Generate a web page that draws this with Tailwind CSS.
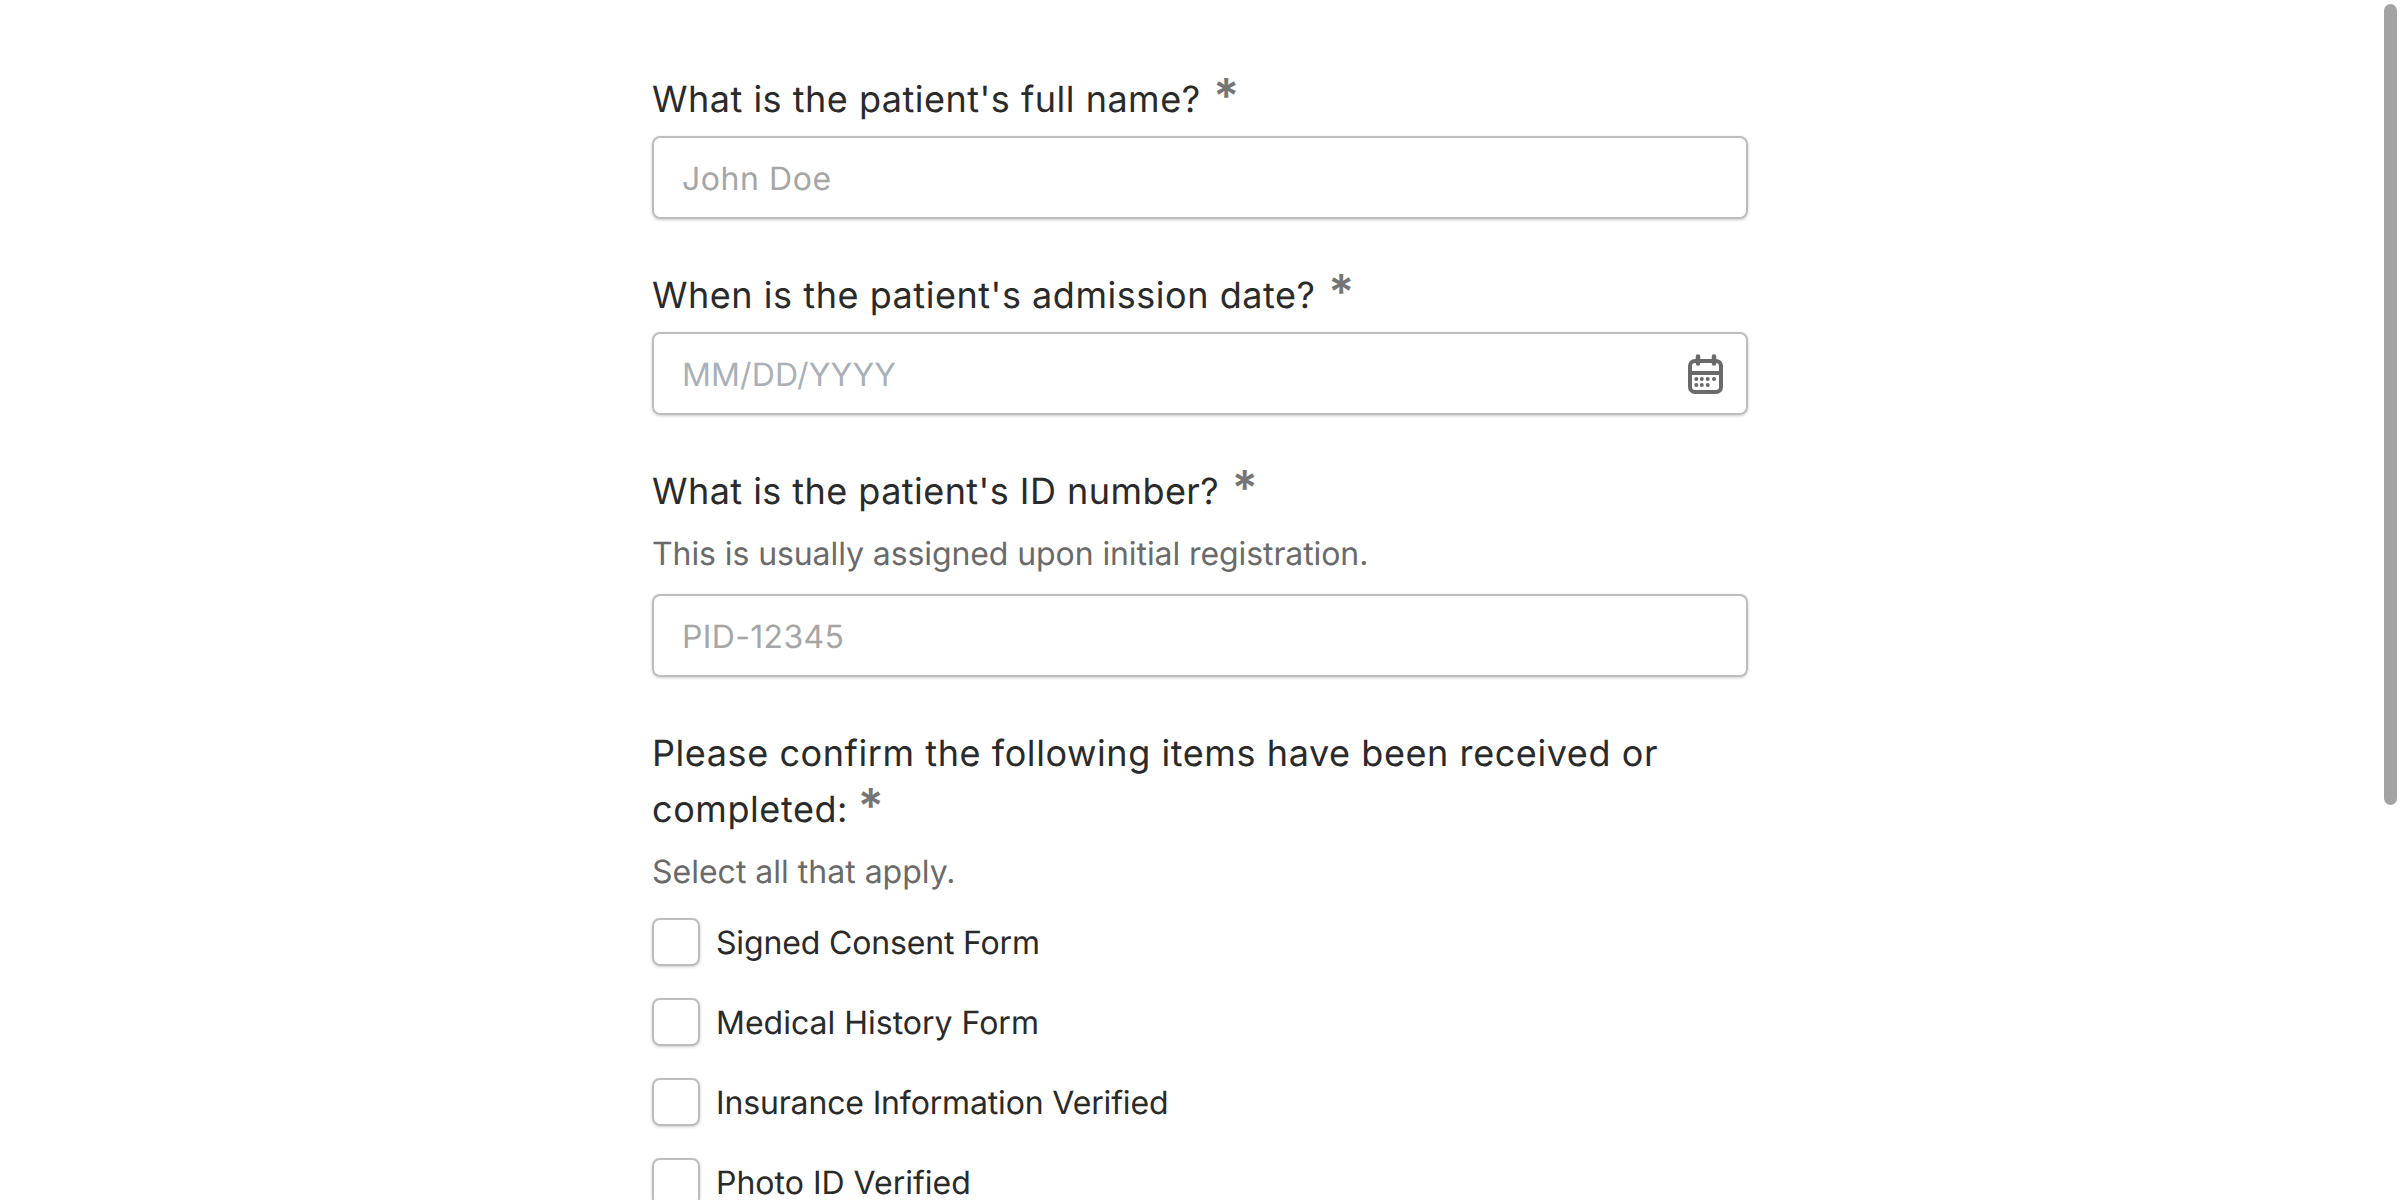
<!DOCTYPE html>
<html lang="en"><head><meta charset="utf-8"><title>Patient form</title>
<script src="https://cdn.jsdelivr.net/npm/@tailwindcss/browser@4"></script></head>
<body class="bg-white">
<div class="relative h-[1200px] overflow-hidden font-['Inter',sans-serif] [text-rendering:geometricPrecision] antialiased">
<main class="w-[1096px] flex flex-col pt-[68px] ml-[652px]">
  <section class="flex flex-col">
    <label class="pt-[3px] text-[36px] leading-[56px] text-[#2a2a2a] tracking-[0.5px]">What is the patient's full name? <span class="relative top-[1px] text-[#757575] text-[48px] font-semibold leading-[1] ml-[2px]">*</span></label>
    <div class="mt-[9px] h-[83px] border-2 border-[#bdbdbd] rounded-[8px] shadow-[0_1px_3px_rgba(0,0,0,0.2)] flex items-center px-[28px] pt-[2px] text-[32px] tracking-[0.55px] text-[#a6a6a6]">John Doe</div>
  </section>
  <section class="flex flex-col mt-[45px]">
    <label class="pt-[3px] text-[36px] leading-[56px] text-[#2a2a2a] tracking-[0.54px]">When is the patient's admission date? <span class="relative top-[1px] text-[#757575] text-[48px] font-semibold leading-[1] ml-[2px]">*</span></label>
    <div class="mt-[9px] h-[83px] border-2 border-[#bdbdbd] rounded-[8px] shadow-[0_1px_3px_rgba(0,0,0,0.2)] flex items-center justify-between pl-[28px] pr-[20px] pt-[2px] text-[32px] tracking-[0.15px] text-[#aab0b8]">MM/DD/YYYY
      <svg class="w-[40px] h-[40px] -mt-[2px]" viewBox="0 0 40 40" fill="none" stroke="#6a6a6a" stroke-width="4"><rect x="4" y="7" width="31" height="31" rx="5"/><path d="M4 19h31" /><path d="M12 2.500v7M28 2.500v7" stroke-width="4.500" stroke-linecap="round"/><g fill="#6a6a6a" stroke="none"><circle cx="10.300" cy="25" r="2"/><circle cx="15.800" cy="25" r="2"/><circle cx="21.700" cy="25" r="2"/><circle cx="28" cy="25" r="2"/><circle cx="10.300" cy="31" r="2"/><circle cx="15.800" cy="31" r="2"/><circle cx="21.700" cy="31" r="2"/></g></svg>
    </div>
  </section>
  <section class="flex flex-col mt-[45px]">
    <label class="pt-[3px] text-[36px] leading-[56px] text-[#2a2a2a] tracking-[0.45px]">What is the patient's ID number? <span class="relative top-[1px] text-[#757575] text-[48px] font-semibold leading-[1] ml-[2px]">*</span></label>
    <p class="mt-[11px] text-[32px] leading-[48px] tracking-[-0.09px] text-[#6a6a6a]">This is usually assigned upon initial registration.</p>
    <div class="mt-[16px] h-[83px] border-2 border-[#bdbdbd] rounded-[8px] shadow-[0_1px_3px_rgba(0,0,0,0.2)] flex items-center px-[28px] pt-[2px] text-[32px] tracking-[0.35px] text-[#a6a6a6]">PID-12345</div>
  </section>
  <section class="flex flex-col mt-[45px]">
    <label class="pt-[3px] text-[36px] leading-[56px] text-[#2a2a2a] tracking-[0.58px]">Please confirm the following items have been received or completed: <span class="relative top-[1px] text-[#757575] text-[48px] font-semibold leading-[1] -ml-[1px]">*</span></label>
    <p class="mt-[11px] text-[32px] leading-[48px] text-[#6a6a6a]">Select all that apply.</p>
    <div class="flex flex-col gap-[32px] mt-[22px]">
      <div class="flex items-center gap-[16px] h-[48px] text-[32px] text-[#2a2a2a]"><span class="w-[48px] h-[48px] border-2 border-[#bdbdbd] rounded-[8px] shadow-[0_1px_3px_rgba(0,0,0,0.2)]"></span><span class="pt-[2px] leading-[44px] tracking-[-0.16px]">Signed Consent Form</span></div>
      <div class="flex items-center gap-[16px] h-[48px] text-[32px] text-[#2a2a2a]"><span class="w-[48px] h-[48px] border-2 border-[#bdbdbd] rounded-[8px] shadow-[0_1px_3px_rgba(0,0,0,0.2)]"></span><span class="pt-[2px] leading-[44px]">Medical History Form</span></div>
      <div class="flex items-center gap-[16px] h-[48px] text-[32px] text-[#2a2a2a]"><span class="w-[48px] h-[48px] border-2 border-[#bdbdbd] rounded-[8px] shadow-[0_1px_3px_rgba(0,0,0,0.2)]"></span><span class="pt-[2px] leading-[44px] tracking-[-0.15px]">Insurance Information Verified</span></div>
      <div class="flex items-center gap-[16px] h-[48px] text-[32px] text-[#2a2a2a]"><span class="w-[48px] h-[48px] border-2 border-[#bdbdbd] rounded-[8px] shadow-[0_1px_3px_rgba(0,0,0,0.2)]"></span><span class="pt-[2px] leading-[44px]">Photo ID Verified</span></div>
    </div>
  </section>
</main>
<div class="absolute right-[3px] top-[4px] w-[13px] h-[801px] rounded-full bg-[#a3a3a3]"></div>
</div>
</body></html>
